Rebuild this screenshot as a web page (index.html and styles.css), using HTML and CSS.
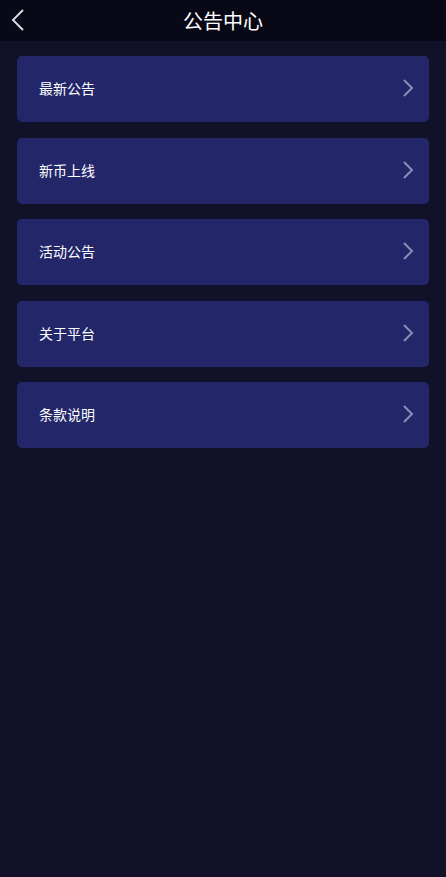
FILE: index.html
```html
<!DOCTYPE html>
<html lang="zh">
<head>
<meta charset="utf-8">
<title>公告中心</title>
<link rel="stylesheet" href="styles.css">
</head>
<body>
<header class="topbar">
  <a class="back" aria-label="返回">
    <svg width="14" height="24" viewBox="0 0 14 24"><path d="M12 2 L2 12 L12 22" fill="none" stroke="#d8d8e0" stroke-width="2"/></svg>
  </a>
  <h1 class="title">公告中心</h1>
</header>
<main class="list">
  <a class="item"><span>最新公告</span><svg class="chev" width="12" height="20" viewBox="0 0 12 20"><path d="M2 2 L10 10 L2 18" fill="none" stroke="#8a8db5" stroke-width="2"/></svg></a>
  <a class="item"><span>新币上线</span><svg class="chev" width="12" height="20" viewBox="0 0 12 20"><path d="M2 2 L10 10 L2 18" fill="none" stroke="#8a8db5" stroke-width="2"/></svg></a>
  <a class="item"><span>活动公告</span><svg class="chev" width="12" height="20" viewBox="0 0 12 20"><path d="M2 2 L10 10 L2 18" fill="none" stroke="#8a8db5" stroke-width="2"/></svg></a>
  <a class="item"><span>关于平台</span><svg class="chev" width="12" height="20" viewBox="0 0 12 20"><path d="M2 2 L10 10 L2 18" fill="none" stroke="#8a8db5" stroke-width="2"/></svg></a>
  <a class="item"><span>条款说明</span><svg class="chev" width="12" height="20" viewBox="0 0 12 20"><path d="M2 2 L10 10 L2 18" fill="none" stroke="#8a8db5" stroke-width="2"/></svg></a>
</main>
</body>
</html>
```
FILE: styles.css
```css
html, body {
  margin: 0;
  padding: 0;
  background: #11112a;
  min-height: 100%;
  font-family: "Noto Sans CJK SC", "Noto Sans", sans-serif;
  color: #ffffff;
}
body { min-height: 877px; }
.topbar {
  height: 41px;
  background: #080817;
  display: flex;
  align-items: center;
  justify-content: center;
  position: relative;
}
.back {
  position: absolute;
  left: 11px;
  top: 8px;
  display: flex;
}
.title {
  margin: 0;
  font-size: 20px;
  font-weight: 400;
  line-height: 40px;
}
.list {
  display: flex;
  flex-direction: column;
  gap: 15.5px;
  padding: 15px 17px;
}
.item {
  height: 66px;
  box-sizing: border-box;
  background: #23276a;
  border-radius: 5px;
  display: flex;
  align-items: center;
  justify-content: space-between;
  padding: 0 15px 2px 22px;
  font-size: 14px;
  color: #ffffff;
}
.chev { display: block; }
```
